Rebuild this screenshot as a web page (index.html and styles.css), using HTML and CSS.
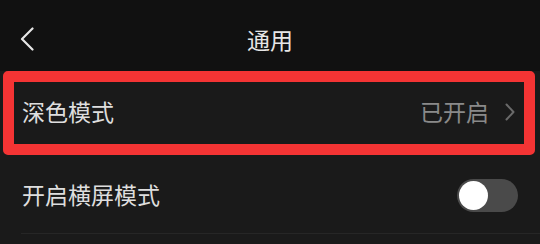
FILE: index.html
```html
<!DOCTYPE html>
<html lang="zh-CN">
<head>
    <meta charset="UTF-8">
    <meta name="viewport" content="width=device-width, initial-scale=1.0">
    <title>通用</title>
    <link rel="stylesheet" href="styles.css">
</head>
<body>
    <div class="page">
        <div class="header">
            <button class="back-btn">
                <svg width="14" height="24" viewBox="0 0 14 24">
                    <path d="M12.5 1.5 L2 12 L12.5 22.5" fill="none" stroke="#e6e6e6" stroke-width="2.2" stroke-linecap="round" stroke-linejoin="round"/>
                </svg>
            </button>
            <h1 class="title">通用</h1>
            <span></span>
        </div>
        <div class="list">
            <div class="row row-link highlighted">
                <span class="label">深色模式</span>
                <span class="value">
                    已开启
                    <svg class="arrow" width="10" height="18" viewBox="0 0 10 18">
                        <path d="M1.5 1.5 L8.5 9 L1.5 16.5" fill="none" stroke="#6a6a6a" stroke-width="2" stroke-linecap="round" stroke-linejoin="round"/>
                    </svg>
                </span>
            </div>
            <div class="row row-switch">
                <span class="label">开启横屏模式</span>
                <span class="switch"><span class="knob"></span></span>
            </div>
        </div>
    </div>
</body>
</html>
```

FILE: styles.css
```css
body {
    margin: 0;
    background-color: #1a1a1a;
    font-family: "Noto Sans CJK SC", "Noto Sans", sans-serif;
    color: #dedede;
}
.page {
    width: 540px;
}
.header {
    height: 71px;
    background-color: #111111;
    display: grid;
    grid-template-columns: 60px 1fr 60px;
    align-items: center;
    padding-top: 6px;
    box-sizing: border-box;
}
.back-btn {
    background: none;
    border: none;
    padding: 0 0 0 20px;
    display: flex;
    align-items: center;
    justify-content: flex-start;
    cursor: pointer;
}
.title {
    margin: 0;
    text-align: center;
    font-size: 23px;
    font-weight: 400;
    color: #e6e6e6;
}
.list {
    display: flex;
    flex-direction: column;
}
.row {
    display: flex;
    justify-content: space-between;
    align-items: center;
    font-size: 23px;
    box-sizing: border-box;
}
.row-link {
    height: 84px;
    padding: 0 25px 4px 22px;
    position: relative;
}
.highlighted::after {
    content: "";
    position: absolute;
    left: 3px;
    top: 0;
    width: 532px;
    height: 84px;
    border: 11px solid #f43434;
    border-radius: 5px;
    box-sizing: border-box;
}
.value {
    display: flex;
    align-items: center;
    gap: 16px;
    color: #8a8a8a;
}
.arrow {
    margin-top: 2px;
}
.row-switch {
    height: 79px;
    margin-left: 21px;
    padding: 0 22px 0 1px;
    border-bottom: 1px solid #262626;
}
.label {
    color: #dedede;
}
.switch {
    width: 61px;
    height: 33px;
    border-radius: 17px;
    background-color: #4a4a4a;
    display: flex;
    align-items: center;
    padding-left: 2px;
    box-sizing: border-box;
    margin-top: 3px;
}
.knob {
    width: 29px;
    height: 29px;
    border-radius: 50%;
    background-color: #ffffff;
}
```
